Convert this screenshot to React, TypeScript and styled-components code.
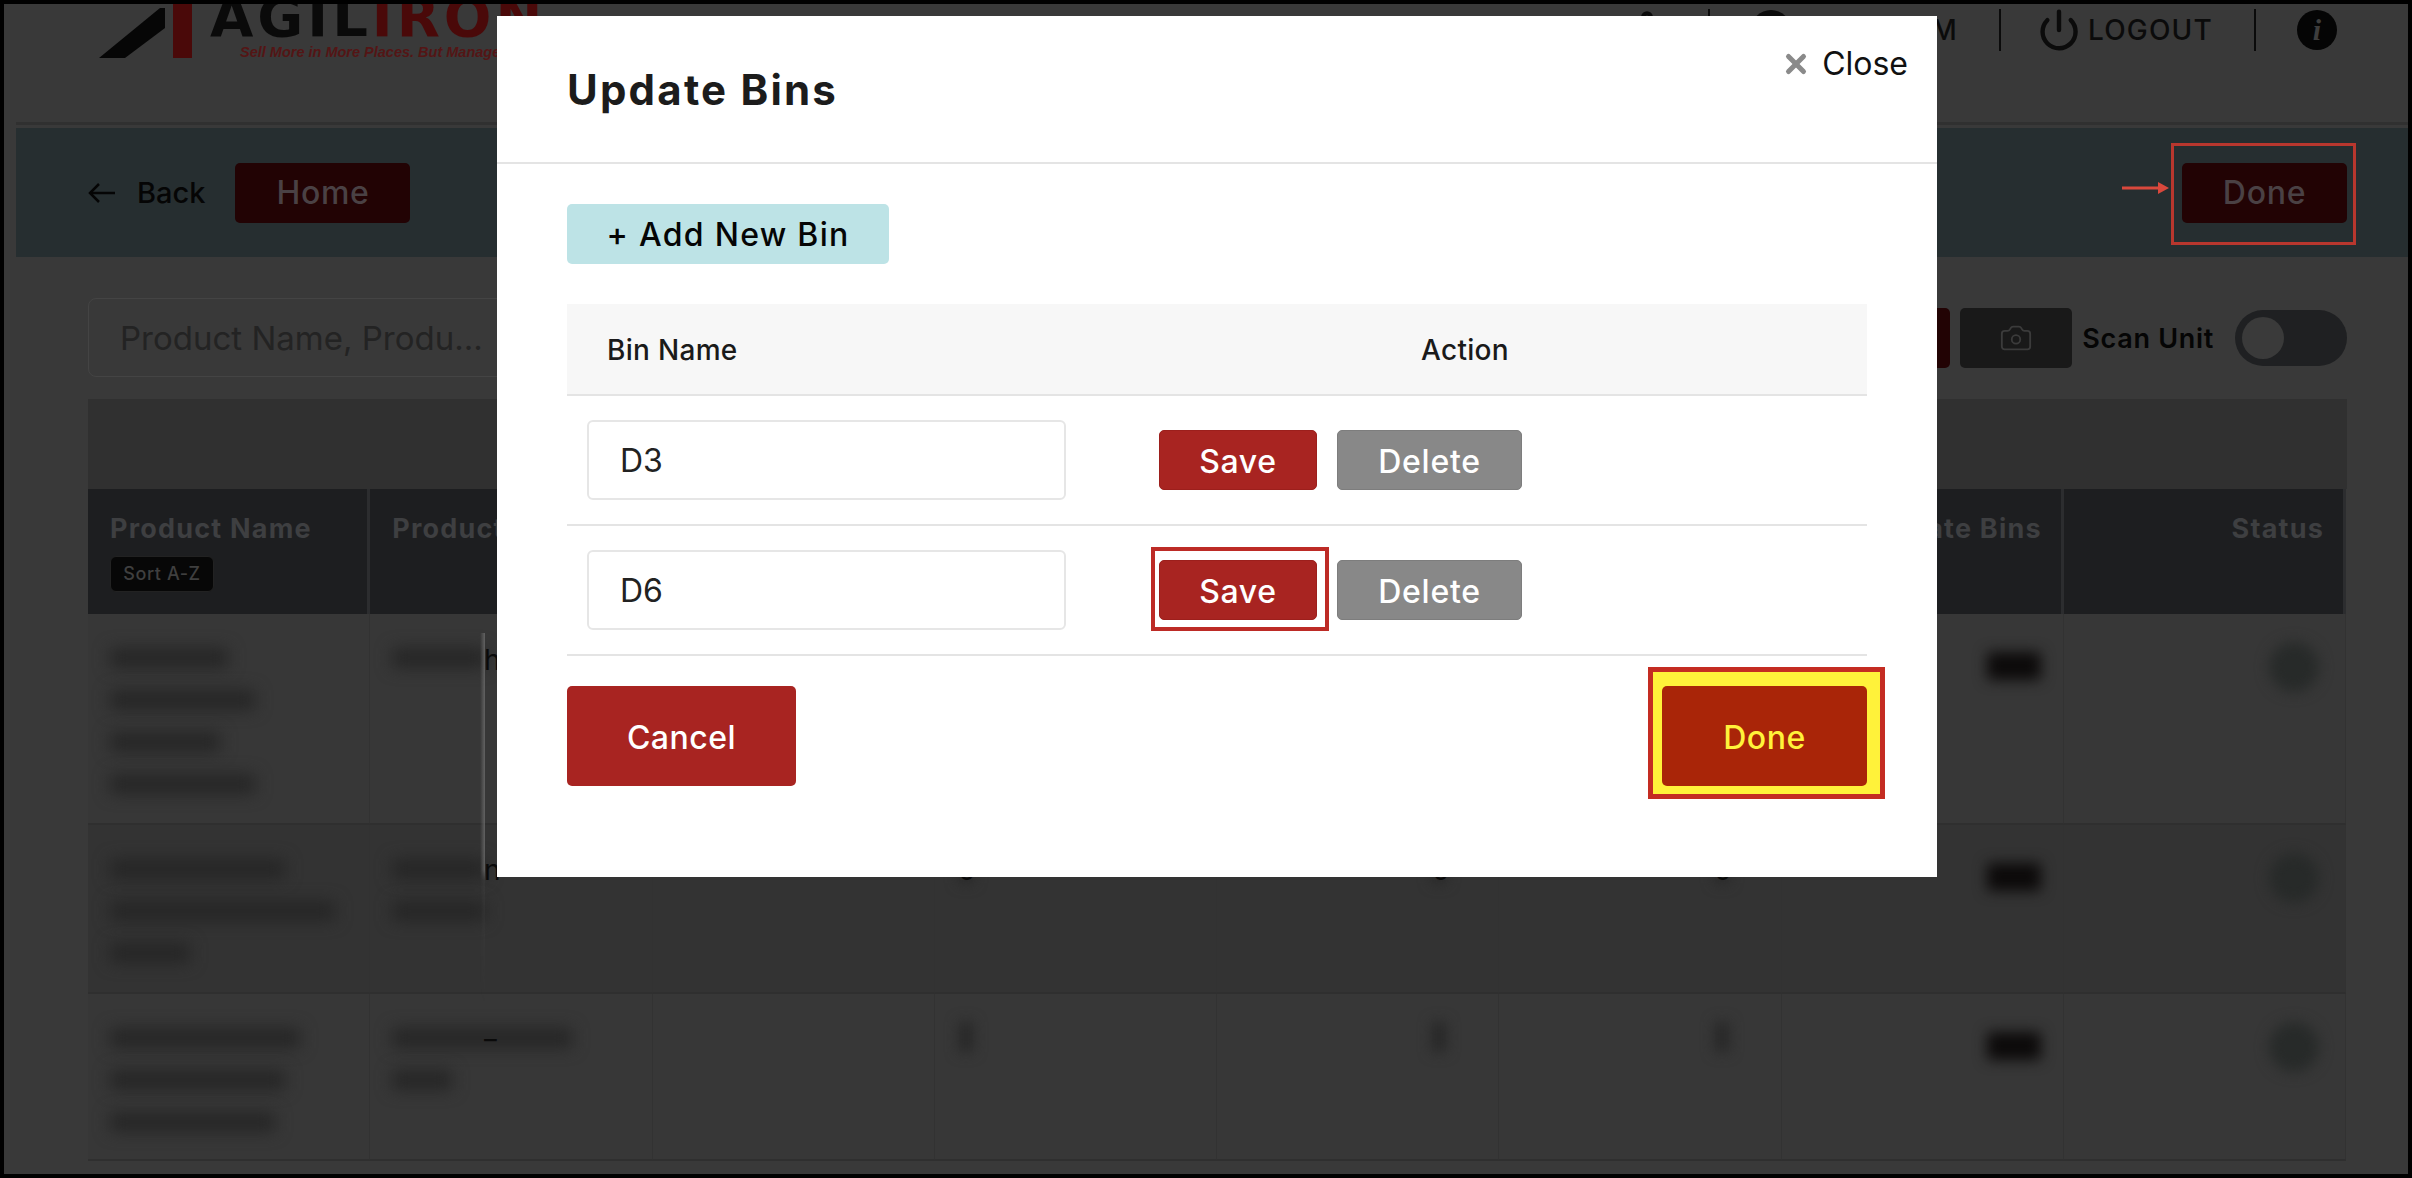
import React from 'react';
import styled, { createGlobalStyle } from 'styled-components';
import { Camera, Power, Settings, X } from 'lucide-react';

const GlobalStyle = createGlobalStyle`
  html, body {
    margin: 0;
    padding: 0;
    background: #000;
    overflow: hidden;
  }
  * {
    box-sizing: border-box;
  }
`;

const Frame = styled.div`
  position: relative;
  width: 2412px;
  height: 1178px;
  border: 4px solid #000;
  background: #393939;
  overflow: hidden;
  font-family: Inter, 'Liberation Sans', sans-serif;
`;

const TopBar = styled.header`
  display: flex;
  justify-content: space-between;
  height: 121px;
  margin-left: 12px;
  padding-left: 80px;
  border-bottom: 3px solid #303030;
`;

const Logo = styled.div`
  display: flex;
  align-items: flex-start;
  height: 60px;
  overflow: hidden;
`;

const LogoText = styled.div`
  margin-left: 4px;
  display: flex;
  flex-direction: column;
  white-space: nowrap;
`;

const WordMark = styled.div`
  height: 56px;
  margin-top: -15px;
  font-family: 'DejaVu Sans', sans-serif;
  font-weight: 700;
  font-size: 56px;
  line-height: 56px;
  letter-spacing: 4px;
  color: #0a0a0a;
  & > span {
    color: #4a0909;
  }
`;

const Tagline = styled.div`
  margin: -3px 0 0 30px;
  font-family: 'Liberation Sans', sans-serif;
  font-weight: 700;
  font-style: italic;
  font-size: 14.5px;
  line-height: 20px;
  color: #541515;
`;

const UserNav = styled.nav`
  display: flex;
  align-items: center;
  height: 52px;
  padding-right: 71px;
  color: #0b0b0b;
  font-size: 28px;
  font-weight: 500;
`;

const NavDivider = styled.span`
  width: 2px;
  height: 42px;
  margin: 0 41px;
  background: #0b0b0b;
`;

const UserDot = styled.span`
  width: 40px;
  height: 40px;
  margin-right: 140px;
  border-radius: 50%;
  background: #0b0b0b;
`;

const NavItem = styled.span`
  display: flex;
  align-items: center;
  gap: 7px;
  letter-spacing: 1.2px;
  & > svg {
    margin-left: -5px;
  }
`;

const InfoDot = styled.span`
  width: 40px;
  height: 40px;
  border-radius: 50%;
  background: #050505;
  color: #3d3d3d;
  font-family: 'Liberation Serif', serif;
  font-style: italic;
  font-weight: 700;
  font-size: 30px;
  line-height: 40px;
  text-align: center;
`;

const ActionBar = styled.div`
  display: flex;
  align-items: center;
  justify-content: space-between;
  height: 129px;
  margin: 3px 0 0 12px;
  padding: 0 61px 0 72px;
  background: #262e30;
`;

const BarLeft = styled.div`
  display: flex;
  align-items: center;
`;

const BackLink = styled.span`
  display: flex;
  align-items: center;
  gap: 21px;
  margin-right: 30px;
  color: #050505;
  font-size: 29px;
  font-weight: 500;
`;

const DarkRedButton = styled.span<{ $width: number }>`
  position: relative;
  display: flex;
  align-items: center;
  justify-content: center;
  width: ${(p) => p.$width}px;
  height: 60px;
  border-radius: 5px;
  background: #220304;
  color: #4a4144;
  font-size: 32px;
  font-weight: 500;
  letter-spacing: 0.7px;
`;

const CalloutBox = styled.span`
  position: absolute;
  left: -11px;
  top: -20px;
  width: 185px;
  height: 102px;
  border: 3px solid #b8372e;
`;

const CalloutArrow = styled.svg`
  position: absolute;
  left: -60px;
  top: 18px;
`;

const Content = styled.main`
  margin-left: 12px;
  padding: 41px 61px 0 72px;
`;

const SearchRow = styled.div`
  display: flex;
  align-items: center;
  justify-content: space-between;
  height: 79px;
  margin-bottom: 22px;
`;

const SearchField = styled.div`
  width: 700px;
  height: 79px;
  padding: 0 31px;
  border: 1px solid #444;
  border-radius: 8px;
  color: #232323;
  font-size: 33px;
  line-height: 79px;
`;

const SearchTools = styled.div`
  display: flex;
  align-items: center;
`;

const ScanButton = styled.span`
  width: 60px;
  height: 60px;
  margin-right: 10px;
  border-radius: 5px;
  background: #220304;
`;

const CameraButton = styled.span`
  display: flex;
  align-items: center;
  justify-content: center;
  width: 112px;
  height: 60px;
  margin-right: 10px;
  border-radius: 5px;
  background: #191919;
  color: #3b3b3b;
`;

const ScanLabel = styled.span`
  margin-right: 21px;
  padding-top: 2px;
  color: #050505;
  font-size: 27px;
  font-weight: 600;
  letter-spacing: 0.7px;
`;

const ToggleTrack = styled.span`
  display: flex;
  align-items: center;
  width: 112px;
  height: 56px;
  padding: 0 7px;
  border-radius: 28px;
  background: #1f2022;
`;

const ToggleKnob = styled.span`
  width: 42px;
  height: 42px;
  border-radius: 50%;
  background: #3a3a3a;
`;

const TableBand = styled.div`
  height: 90px;
  background: #303030;
`;

const TableGrid = styled.div`
  display: grid;
  grid-template-columns: repeat(8, 282.25px);
`;

const HeadCell = styled.div<{ $right?: boolean }>`
  height: 125px;
  padding: 20px 19px 0 22px;
  border-right: 3px solid #2c2d2f;
  background: #1d1e20;
  color: #3e3f41;
  font-size: 27px;
  line-height: 40px;
  font-weight: 700;
  letter-spacing: 1.2px;
  white-space: nowrap;
  text-align: ${(p) => (p.$right ? 'right' : 'left')};
`;

const SortPill = styled.span`
  display: block;
  width: 104px;
  height: 36px;
  margin-top: 7px;
  border: 1px solid #222;
  border-radius: 6px;
  background: #070707;
  color: #3f3f3f;
  font-size: 18px;
  font-weight: 500;
  letter-spacing: 0.6px;
  line-height: 34px;
  text-align: center;
`;

const BodyCell = styled.div<{ $height: number; $right?: boolean; $shade?: boolean }>`
  display: flex;
  flex-direction: column;
  align-items: ${(p) => (p.$right ? 'flex-end' : 'flex-start')};
  height: ${(p) => p.$height}px;
  padding: 36px 22px 0;
  border-right: 1px solid #323232;
  border-bottom: 2px solid #2f2f2f;
  background: ${(p) => (p.$shade ? '#333333' : '#373737')};
`;

const SmudgedLine = styled.span<{ $width: number }>`
  flex: none;
  width: ${(p) => p.$width}px;
  height: 20px;
  margin: -2px 0 24px;
  background: #262626;
  filter: blur(8px);
`;

const SmudgedDigit = styled.span<{ $left?: number; $right?: number }>`
  width: 14px;
  height: 30px;
  margin: -8px ${(p) => p.$right ?? 0}px 0 ${(p) => p.$left ?? 0}px;
  background: #262626;
  filter: blur(7px);
`;

const SmudgedBlock = styled.span<{ $round?: boolean }>`
  width: ${(p) => (p.$round ? 50 : 54)}px;
  height: ${(p) => (p.$round ? 50 : 28)}px;
  margin-top: ${(p) => (p.$round ? -8 : 2)}px;
  margin-right: ${(p) => (p.$round ? 4 : 0)}px;
  border-radius: ${(p) => (p.$round ? '50%' : '4px')};
  background: ${(p) => (p.$round ? '#272a29' : '#0c0a0a')};
  filter: blur(7px);
`;

const SharpGlyph = styled.span<{ $left: number; $top: number }>`
  position: absolute;
  left: ${(p) => p.$left}px;
  top: ${(p) => p.$top}px;
  color: #0a0a0a;
  font-size: 28px;
  line-height: 32px;
`;

const EdgeGlow = styled.span`
  position: absolute;
  left: 476px;
  top: 629px;
  width: 5px;
  height: 370px;
  background: linear-gradient(to right, rgba(110, 110, 110, 0), rgba(110, 110, 110, 0.8));
  -webkit-mask-image: linear-gradient(to bottom, #000 64%, rgba(0, 0, 0, 0.15) 67%, transparent);
`;

const Modal = styled.section`
  position: absolute;
  left: 493px;
  top: 12px;
  width: 1440px;
  height: 861px;
  background: #fff;
  color: #111;
`;

const ModalHeader = styled.div`
  display: flex;
  align-items: flex-start;
  justify-content: space-between;
  height: 148px;
  padding: 49px 29px 0 70px;
  border-bottom: 2px solid #e4e4e4;
`;

const ModalTitle = styled.h2`
  margin: 0;
  color: #1c1c1c;
  font-size: 42px;
  line-height: 50px;
  font-weight: 700;
  letter-spacing: 2.2px;
`;

const CloseButton = styled.span`
  display: flex;
  align-items: center;
  gap: 11px;
  margin: -23px 0 0 0;
  color: #111;
  font-size: 32px;
  line-height: 44px;
`;

const ModalBody = styled.div`
  padding: 40px 70px 0;
`;

const AddButton = styled.span`
  display: flex;
  align-items: center;
  justify-content: center;
  width: 322px;
  height: 60px;
  margin-bottom: 40px;
  border-radius: 5px;
  background: #bde3e6;
  color: #050505;
  font-size: 32px;
  font-weight: 500;
  letter-spacing: 1.3px;
`;

const BinHead = styled.div`
  display: grid;
  grid-template-columns: 548px 1fr;
  align-items: center;
  height: 92px;
  padding: 2px 0 0 40px;
  border-bottom: 2px solid #e4e4e4;
  background: #f7f7f7;
  color: #1a1a1a;
  font-size: 28px;
  font-weight: 500;
  letter-spacing: 0.3px;
`;

const ActionHead = styled.span`
  padding-left: 266px;
`;

const BinRow = styled.div`
  display: flex;
  align-items: center;
  height: 130px;
  padding-left: 20px;
  border-bottom: 2px solid #e4e4e4;
`;

const BinInput = styled.input`
  width: 479px;
  height: 80px;
  margin-right: 93px;
  padding: 0 31px;
  border: 2px solid #e6e6e6;
  border-radius: 6px;
  color: #222;
  font-family: inherit;
  font-size: 32px;
`;

const RowButton = styled.button<{ $grey?: boolean; $width: number }>`
  position: relative;
  width: ${(p) => p.$width}px;
  height: 60px;
  margin-right: 20px;
  padding: 2px 0 0;
  border: 1px solid ${(p) => (p.$grey ? '#7d7d7d' : '#9c1f1c')};
  border-radius: 5px;
  background: ${(p) => (p.$grey ? '#888888' : '#a82421')};
  color: #fff;
  font-family: inherit;
  font-size: 32px;
  font-weight: 500;
  letter-spacing: 0.7px;
`;

const SaveCallout = styled.span`
  position: absolute;
  left: -9px;
  top: -14px;
  width: 178px;
  height: 84px;
  border: 4px solid #bd2b26;
`;

const ModalFooter = styled.div`
  display: flex;
  justify-content: space-between;
  margin-top: 30px;
`;

const FooterButton = styled.button<{ $width: number; $done?: boolean }>`
  position: relative;
  width: ${(p) => p.$width}px;
  height: 100px;
  padding: 2px 0 0;
  border: none;
  border-radius: 5px;
  background: ${(p) => (p.$done ? '#a92508' : '#a82421')};
  color: ${(p) => (p.$done ? '#fff23a' : '#fff')};
  font-family: inherit;
  font-size: 32px;
  font-weight: 500;
  letter-spacing: 0.5px;
`;

const DoneHighlight = styled.span`
  position: absolute;
  z-index: -1;
  left: -14px;
  top: -19px;
  width: 237px;
  height: 132px;
  border: 5px solid #c42c22;
  background: #fff23a;
`;

const FooterDone = styled.span`
  position: relative;
  z-index: 0;
  display: block;
`;

const columns = ['Product Name', 'Product', '', '', '', '', 'Update Bins', 'Status'];

const rows = [
  {
    height: 211,
    name: [118, 145, 110, 145],
    code: [94],
  },
  {
    height: 169,
    name: [175, 225, 80],
    code: [94, 94],
  },
  {
    height: 167,
    name: [190, 175, 165],
    code: [180, 60],
  },
];

const App: React.FC = () => {
  return (
    <>
      <GlobalStyle />
      <Frame>
        <TopBar>
          <Logo>
            <svg width="110" height="60" viewBox="0 0 110 60">
              <polygon points="3,54 64,4 69,4 69,24 29,54" fill="#060606" />
              <polygon points="77,0 96,0 96,54 77,54" fill="#4a0909" />
            </svg>
            <LogoText>
              <WordMark>
                AGIL<span>IRON</span>
              </WordMark>
              <Tagline>Sell More in More Places. But Manage it</Tagline>
            </LogoText>
          </Logo>
          <UserNav>
            <Settings size={40} strokeWidth={2.5} />
            <NavDivider />
            <UserDot />
            <NavItem>M</NavItem>
            <NavDivider />
            <NavItem>
              <Power size={44} strokeWidth={2.4} />
              LOGOUT
            </NavItem>
            <NavDivider />
            <InfoDot>i</InfoDot>
          </UserNav>
        </TopBar>

        <ActionBar>
          <BarLeft>
            <BackLink>
              <svg width="28" height="22" viewBox="0 0 28 22" fill="none" stroke="#050505" strokeWidth="2.5">
                <path d="M27 11H2" />
                <path d="M11 2l-9 9 9 9" />
              </svg>
              Back
            </BackLink>
            <DarkRedButton $width={175}>Home</DarkRedButton>
          </BarLeft>
          <DarkRedButton $width={165}>
            Done
            <CalloutBox />
            <CalloutArrow width="48" height="14" viewBox="0 0 48 14">
              <path d="M0 7h38" stroke="#d9483c" strokeWidth="3" />
              <path d="M36 1l11 6-11 6z" fill="#d9483c" />
            </CalloutArrow>
          </DarkRedButton>
        </ActionBar>

        <Content>
          <SearchRow>
            <SearchField>Product Name, Produ...</SearchField>
            <SearchTools>
              <ScanButton />
              <CameraButton>
                <Camera size={34} strokeWidth={1.3} />
              </CameraButton>
              <ScanLabel>Scan Unit</ScanLabel>
              <ToggleTrack>
                <ToggleKnob />
              </ToggleTrack>
            </SearchTools>
          </SearchRow>

          <TableBand />
          <TableGrid>
            {columns.map((title, i) => (
              <HeadCell key={i} $right={i > 1}>
                {title}
                {i === 0 && <SortPill>Sort A-Z</SortPill>}
              </HeadCell>
            ))}
            {rows.map((row, r) =>
              columns.map((_, c) => (
                <BodyCell key={`${r}-${c}`} $height={row.height} $right={c > 3} $shade={r === 1}>
                  {c === 0 && row.name.map((w, i) => <SmudgedLine key={i} $width={w} />)}
                  {c === 1 && row.code.map((w, i) => <SmudgedLine key={i} $width={w} />)}
                  {c === 3 && <SmudgedDigit $left={2} />}
                  {(c === 4 || c === 5) && <SmudgedDigit $right={30} />}
                  {c === 6 && <SmudgedBlock />}
                  {c === 7 && <SmudgedBlock $round />}
                </BodyCell>
              )),
            )}
          </TableGrid>
        </Content>

        <EdgeGlow />
        <SharpGlyph $left={480} $top={640}>h</SharpGlyph>
        <SharpGlyph $left={480} $top={850}>n</SharpGlyph>
        <SharpGlyph $left={480} $top={1009}>_</SharpGlyph>
        <SharpGlyph $left={954} $top={850}>0</SharpGlyph>
        <SharpGlyph $left={1428} $top={850}>0</SharpGlyph>
        <SharpGlyph $left={1710} $top={850}>0</SharpGlyph>

        <Modal>
          <ModalHeader>
            <ModalTitle>Update Bins</ModalTitle>
            <CloseButton>
              <X size={30} strokeWidth={4} color="#8a8a8a" />
              Close
            </CloseButton>
          </ModalHeader>
          <ModalBody>
            <AddButton>+ Add New Bin</AddButton>
            <BinHead>
              <span>Bin Name</span>
              <ActionHead>Action</ActionHead>
            </BinHead>
            <BinRow>
              <BinInput defaultValue="D3" />
              <RowButton $width={158}>Save</RowButton>
              <RowButton $width={185} $grey>Delete</RowButton>
            </BinRow>
            <BinRow>
              <BinInput defaultValue="D6" />
              <RowButton $width={158}>
                Save
                <SaveCallout />
              </RowButton>
              <RowButton $width={185} $grey>Delete</RowButton>
            </BinRow>
            <ModalFooter>
              <FooterButton $width={229}>Cancel</FooterButton>
              <FooterDone>
                <DoneHighlight />
                <FooterButton $width={205} $done>Done</FooterButton>
              </FooterDone>
            </ModalFooter>
          </ModalBody>
        </Modal>
      </Frame>
    </>
  );
};

export default App;
